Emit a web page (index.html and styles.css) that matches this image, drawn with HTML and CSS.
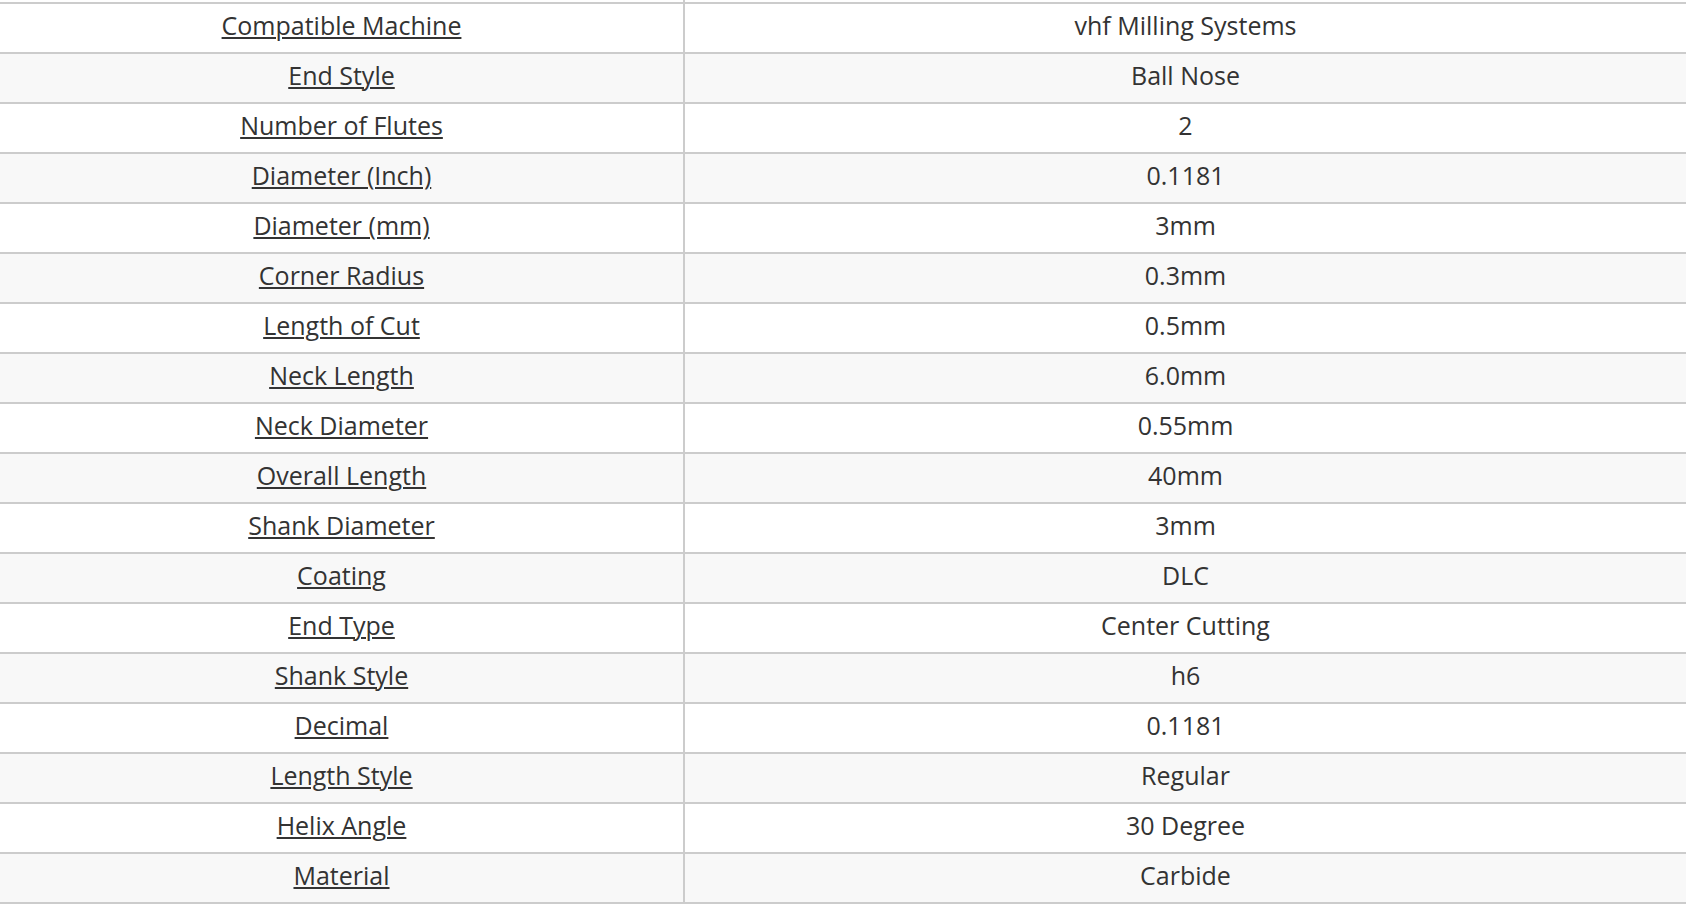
FILE: index.html
```html
<!DOCTYPE html>
<html>
<head>
<meta charset="utf-8">
<link rel="stylesheet" href="styles.css">
</head>
<body>
<table class="spec">
  <colgroup><col class="col-label"><col class="col-value"></colgroup>
  <tbody>
    <tr class="stub"><td></td><td></td></tr>
    <tr><td><a href="#">Compatible Machine</a></td><td>vhf Milling Systems</td></tr>
    <tr><td><a href="#">End Style</a></td><td>Ball Nose</td></tr>
    <tr><td><a href="#">Number of Flutes</a></td><td>2</td></tr>
    <tr><td><a href="#">Diameter (Inch)</a></td><td>0.1181</td></tr>
    <tr><td><a href="#">Diameter (mm)</a></td><td>3mm</td></tr>
    <tr><td><a href="#">Corner Radius</a></td><td>0.3mm</td></tr>
    <tr><td><a href="#">Length of Cut</a></td><td>0.5mm</td></tr>
    <tr><td><a href="#">Neck Length</a></td><td>6.0mm</td></tr>
    <tr><td><a href="#">Neck Diameter</a></td><td>0.55mm</td></tr>
    <tr><td><a href="#">Overall Length</a></td><td>40mm</td></tr>
    <tr><td><a href="#">Shank Diameter</a></td><td>3mm</td></tr>
    <tr><td><a href="#">Coating</a></td><td>DLC</td></tr>
    <tr><td><a href="#">End Type</a></td><td>Center Cutting</td></tr>
    <tr><td><a href="#">Shank Style</a></td><td>h6</td></tr>
    <tr><td><a href="#">Decimal</a></td><td>0.1181</td></tr>
    <tr><td><a href="#">Length Style</a></td><td>Regular</td></tr>
    <tr><td><a href="#">Helix Angle</a></td><td>30 Degree</td></tr>
    <tr><td><a href="#">Material</a></td><td>Carbide</td></tr>
  </tbody>
</table>
</body>
</html>
```
FILE: styles.css
```css
html, body {
  margin: 0;
  padding: 0;
  background: #fff;
}
body {
  font-family: "Open Sans", "Liberation Sans", sans-serif;
  font-size: 25px;
  color: #333;
}
.spec {
  width: 1686px;
  border-collapse: collapse;
  table-layout: fixed;
}
.col-label { width: 684px; }
.spec td {
  height: 42px;
  padding: 0 0 6px;
  text-align: center;
  vertical-align: middle;
  border-bottom: 2px solid #ccc;
  box-sizing: content-box;
  line-height: 30px;
}
.spec td:first-child {
  border-right: 2px solid #ccc;
}
.spec tr.stub td {
  height: 2px;
  padding: 0;
  line-height: 0;
  font-size: 0;
}
.spec tbody tr:nth-child(odd):not(.stub) td {
  background: #f8f8f8;
}
.spec a {
  color: #333;
  text-decoration: underline;
  text-decoration-thickness: 2px;
  text-underline-offset: 2px;
}
```
